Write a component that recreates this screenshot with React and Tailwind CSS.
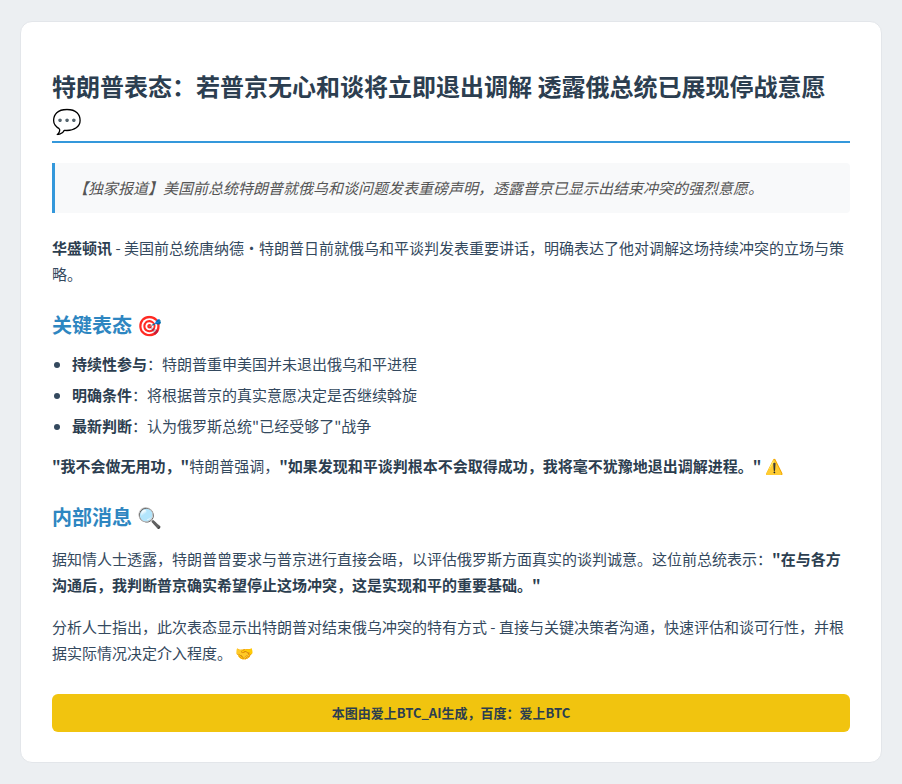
export default function App() {
  const f = { fontFamily: '"Noto Sans CJK SC", "Liberation Sans", sans-serif' };
  return (
    <div className="min-h-[784px] bg-[#eceff2] pt-[21px] pb-[20px] px-[20px]" style={f}>
      <div className="bg-white rounded-xl border border-[#e3e6ea] px-[31px] pt-[47px] pb-[30px] text-[15px] text-[#34495e]">
        <h1 className="text-[24px] font-bold leading-[34px] text-[#2c3e50] pb-[4px] border-b-2 border-[#3498db]">
          特朗普表态：若普京无心和谈将立即退出调解 透露俄总统已展现停战意愿 💬
        </h1>
        <div className="mt-[20px] bg-[#f8f9fa] border-l-[3px] border-[#3498db] rounded-r px-[18px] py-[12px] italic text-[#555] leading-[26px]">
          【独家报道】美国前总统特朗普就俄乌和谈问题发表重磅声明，透露普京已显示出结束冲突的强烈意愿。
        </div>
        <p className="mt-[22px] leading-[26px]"><b className="text-[#2c3e50]">华盛顿讯</b> - 美国前总统唐纳德·特朗普日前就俄乌和平谈判发表重要讲话，明确表达了他对调解这场持续冲突的立场与策略。</p>
        <h2 className="mt-[23px] text-[20px] font-bold text-[#2e86c1] leading-[30px]">关键表态 🎯</h2>
        <ul className="mt-[11px] list-disc pl-[20px] space-y-[5px] leading-[26px]">
          <li><b className="text-[#2c3e50]">持续性参与</b>：特朗普重申美国并未退出俄乌和平进程</li>
          <li><b className="text-[#2c3e50]">明确条件</b>：将根据普京的真实意愿决定是否继续斡旋</li>
          <li><b className="text-[#2c3e50]">最新判断</b>：认为俄罗斯总统"已经受够了"战争</li>
        </ul>
        <p className="mt-[14px] leading-[26px]"><b className="text-[#2c3e50]">"我不会做无用功，"</b>特朗普强调，<b className="text-[#2c3e50]">"如果发现和平谈判根本不会取得成功，我将毫不犹豫地退出调解进程。"</b> ⚠️</p>
        <h2 className="mt-[23px] text-[20px] font-bold text-[#2e86c1] leading-[30px]">内部消息 🔍</h2>
        <p className="mt-[14px] leading-[26px]">据知情人士透露，特朗普曾要求与普京进行直接会晤，以评估俄罗斯方面真实的谈判诚意。这位前总统表示：<b className="text-[#2c3e50]">"在与各方沟通后，我判断普京确实希望停止这场冲突，这是实现和平的重要基础。"</b></p>
        <p className="mt-[16px] leading-[26px]">分析人士指出，此次表态显示出特朗普对结束俄乌冲突的特有方式 - 直接与关键决策者沟通，快速评估和谈可行性，并根据实际情况决定介入程度。 🤝</p>
        <div className="mt-[28px] bg-[#f1c40f] rounded-md h-[38px] flex items-center justify-center text-[13px] font-bold text-[#2c3e50]">
          本图由爱上BTC_AI生成，百度：爱上BTC
        </div>
      </div>
    </div>
  );
}
